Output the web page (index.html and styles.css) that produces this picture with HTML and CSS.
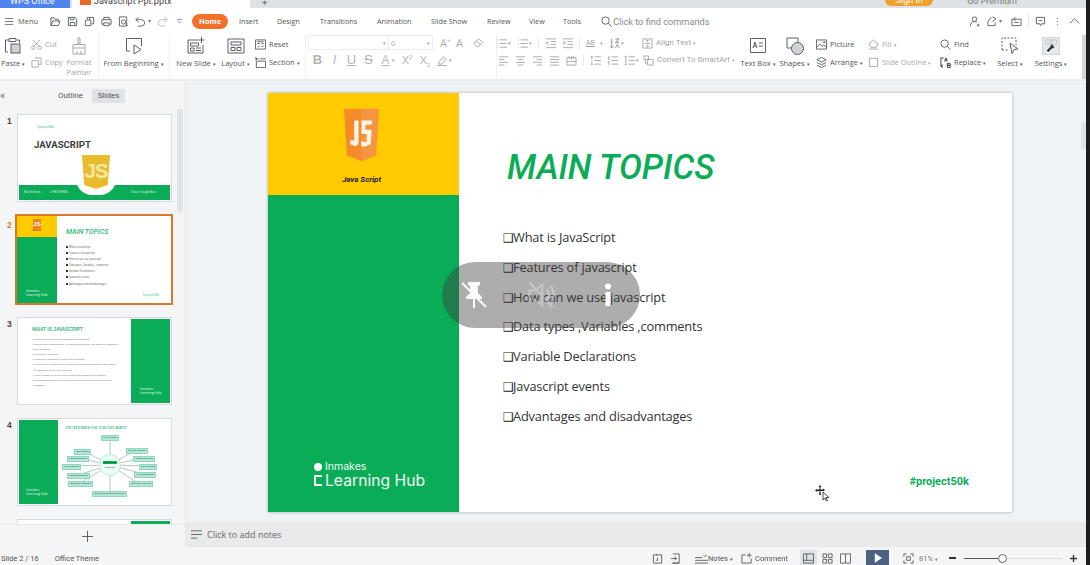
FILE: index.html
```html
<!DOCTYPE html>
<html lang="en">
<head>
    <meta charset="UTF-8">
    <meta name="viewport" content="width=device-width, initial-scale=1.0">
    <title>Javascript Ppt - WPS Office</title>
    <link rel="stylesheet" href="styles.css">
</head>
<body>
<div class="window">
    <div class="app">
        <!-- title bar, mostly cut off at the top of the picture -->
        <div class="titlebar">
            <div class="tab-wps">WPS Office</div>
            <div class="tab-doc"><span class="doc-icon">P</span><span>Javascript Ppt.pptx</span></div>
            <div class="tab-add">+</div>
            <div class="title-right">
                <span class="signin">Sign in</span>
                <span class="premium">Go Premium</span>
            </div>
        </div>

        <div class="menubar">
            <svg class="ic menu-ic" viewBox="0 0 12 10"><path d="M1 1.5h10M1 5h10M1 8.5h10"/></svg>
            <span class="menu-text">Menu</span>
            <div class="quick">
                <svg class="ic" viewBox="0 0 12 12"><path d="M1 10.5V2h3.5l1 1.5h3.5V5.500M1 10.5l2-5h8l-2 5z"/></svg>
                <svg class="ic" viewBox="0 0 12 12"><path d="M1.500 1.500h7l2 2v7h-9zM3.500 10.500V7h5v3.500M3.500 1.500v2.500h4v-2.500"/></svg>
                <svg class="ic" viewBox="0 0 12 12"><path d="M3.500 4V1.500h7v7H8M1.500 4.500h6v6h-6zM6 1.500v3"/></svg>
                <svg class="ic" viewBox="0 0 12 12"><path d="M3 4V1.500h6V4M1 4h10v5H9M3 9H1V4M3 7.500h6v3H3z"/></svg>
                <svg class="ic" viewBox="0 0 12 12"><path d="M1.500 1h8v10h-8z"/><circle cx="6" cy="6.500" r="2.300"/><path d="M7.700 8l3 3"/></svg>
                <svg class="ic" viewBox="0 0 12 12"><path d="M4 1L1 4l3 3M1 4h6a3 3 0 010 7H3"/></svg>
                <span class="caret">▾</span>
                <svg class="ic faint" viewBox="0 0 12 12"><path d="M8 1l3 3-3 3M11 4H5a3 3 0 000 7h4"/></svg>
                <svg class="ic small-ic" viewBox="0 0 10 10"><path d="M2 2h6M2 4l3 3 3-3"/></svg>
            </div>
            <nav class="tabs">
                <span class="tab home">Home</span>
                <span class="tab t-insert">Insert</span>
                <span class="tab t-design">Design</span>
                <span class="tab t-trans">Transitions</span>
                <span class="tab t-anim">Animation</span>
                <span class="tab t-show">Slide Show</span>
                <span class="tab t-review">Review</span>
                <span class="tab t-view">View</span>
                <span class="tab t-tools">Tools</span>
            </nav>
            <div class="find">
                <svg class="ic" viewBox="0 0 12 12"><circle cx="5" cy="5" r="4"/><path d="M8 8l3.500 3.500"/></svg>
                <span>Click to find commands</span>
            </div>
            <div class="menu-right">
                <svg class="ic" viewBox="0 0 12 12"><circle cx="6" cy="3.500" r="2.500"/><path d="M1.500 11c0-3 2-5 4.500-5 1 0 2 .3 2.700 1M8.500 10h3M10 8.500v3"/></svg>
                <svg class="ic" viewBox="0 0 12 12"><path d="M6 2h-1l-3 4v4.500h8V7M7 1l4 2-4 3"/></svg>
                <span class="caret">▾</span>
                <svg class="ic" viewBox="0 0 12 12"><path d="M1 3.500h10v7H1zM3.500 7h5M5 1.500l-2 2 2 1.500"/></svg>
                <span class="menu-sep"></span>
                <svg class="ic" viewBox="0 0 12 12"><path d="M1.500 1.500h9v7H7l-1 2-1-2H1.500zM4 5h4"/></svg>
                <svg class="ic" viewBox="0 0 12 12"><path d="M6 2v1M6 5.500v1M6 9v1"/></svg>
                <svg class="ic" viewBox="0 0 12 12"><path d="M1 8l5-5 5 5"/></svg>
            </div>
        </div>

        <div class="ribbon">
            <div class="big w-paste">
                <svg class="ic ic-l" viewBox="0 0 18 18"><path d="M4 15H1.500V3H5M13 3h2.500v3M5 1.500h7v3H5z"/><rect class="fill" x="7" y="7" width="9" height="9"/></svg>
                <span>Paste <i>▾</i></span>
            </div>
            <div class="stack w-clip faded">
                <div class="row"><svg class="ic" viewBox="0 0 12 12"><path d="M2 1l7 7M10 1L3 8"/><circle cx="2.500" cy="9.500" r="1.800"/><circle cx="9.500" cy="9.500" r="1.800"/></svg><span>Cut</span></div>
                <div class="row"><svg class="ic" viewBox="0 0 12 12"><path d="M4 1h7v7H8M1 4h7v7H1z"/></svg><span>Copy</span></div>
            </div>
            <div class="big w-painter faded">
                <svg class="ic ic-l" viewBox="0 0 18 18"><path d="M8 1h2v6H8zM3 7.500h12V11H3zM3 11l0 6h12v-6M7 14v3M11 14v3"/></svg>
                <span>Format<br>Painter</span>
            </div>
            <span class="sep s1"></span>
            <div class="big w-begin">
                <svg class="ic ic-l" viewBox="0 0 18 18"><path d="M5 14H1.500V1.500h15V9M9 8l7 4.500-7 4.500z"/></svg>
                <span>From Beginning <i>▾</i></span>
            </div>
            <span class="sep s2"></span>
            <div class="big w-new">
                <svg class="ic ic-l" viewBox="0 0 18 18"><path d="M11 3H1v13h15V8M3.500 6h8v3h-8zM3.500 11h3.500v3H3.500zM9 11h5M9 13.500h5M14.500 0v6M11.500 3h6"/></svg>
                <span>New Slide <i>▾</i></span>
            </div>
            <div class="big w-layout">
                <svg class="ic ic-l" viewBox="0 0 18 18"><path d="M1 2h16v14H1zM4 5h10v3H4zM4 10.500h4v3H4zM10 10.500h4v3h-4z"/></svg>
                <span>Layout <i>▾</i></span>
            </div>
            <div class="stack w-reset">
                <div class="row"><svg class="ic" viewBox="0 0 12 12"><path d="M.5 1h11v10H.5zM2.500 3h7M2.500 5h3M7 5h2.500M3 8.500h2M7 8h2.500"/></svg><span>Reset</span></div>
                <div class="row"><svg class="ic" viewBox="0 0 12 12"><path d="M0 2h4M5.500 2h6.500M1.500 4.500h10v7h-10zM.5 .5l2 1.500-2 1.500"/></svg><span>Section <i>▾</i></span></div>
            </div>
            <span class="sep s3"></span>
            <div class="font-group faded">
                <div class="font-top">
                    <div class="font-box font-name"><i>▾</i></div>
                    <div class="font-box font-size">0<i>▾</i></div>
                    <span class="glyph">A<sup>+</sup></span>
                    <span class="glyph">A<sup>-</sup></span>
                    <svg class="ic eraser" viewBox="0 0 12 12"><path d="M1 7l5-5 4.500 3.500-4.500 5H4zM3.500 4.500L8 8"/></svg>
                </div>
                <div class="font-bottom">
                    <b class="fmt">B</b><em class="fmt">I</em><u class="fmt">U</u><s class="fmt">S</s>
                    <u class="fmt fmt-a">A</u><i class="tiny-caret">▾</i>
                    <span class="fmt sc">X<sup>2</sup></span><span class="fmt sc">X<sub>2</sub></span>
                    <svg class="ic" viewBox="0 0 12 12"><path d="M2 8l5-6 3 2.500-5 5.500H2zM0 11.500h11"/></svg><i class="tiny-caret">▾</i>
                </div>
            </div>
            <span class="sep s4"></span>
            <div class="para-group faded">
                <div class="para-row">
                    <svg class="ic" viewBox="0 0 12 12"><path d="M1 2h1M4 2h8M1 6h1M4 6h8M1 10h1M4 10h8"/></svg><i class="tiny-caret">▾</i>
                    <svg class="ic" viewBox="0 0 12 12"><path d="M1 2h1M4 2h8M1 6h1M4 6h8M1 10h1M4 10h8"/></svg><i class="tiny-caret">▾</i>
                    <span class="para-sep"></span>
                    <svg class="ic" viewBox="0 0 12 12"><path d="M1 1h11M6 4h6M6 7h6M1 10.500h11M4 4L1 5.500 4 7"/></svg>
                    <svg class="ic" viewBox="0 0 12 12"><path d="M1 1h11M6 4h6M6 7h6M1 10.500h11M1 4l3 1.500L1 7"/></svg>
                    <span class="para-sep"></span>
                    <span class="ab">AB</span><i class="tiny-caret">▾</i>
                    <svg class="ic dark" viewBox="0 0 12 12"><path d="M3 1v10M1 9l2 2 2-2M7 1h4l-4 4h4M7 11l2-4 2 4"/></svg><i class="tiny-caret">▾</i>
                    <svg class="ic align-ic" viewBox="0 0 12 12"><path d="M1 1h10v10H1zM6 2.500v2M4.500 3.500L6 2l1.500 1.500M6 9.500v-2M4.500 8.500L6 10l1.500-1.500M3 6h6"/></svg>
                    <span class="lbl">Align Text <i>▾</i></span>
                </div>
                <div class="para-row para-low">
                    <svg class="ic" viewBox="0 0 12 12"><path d="M1 2h10M1 5h6M1 8h10M1 11h6"/></svg>
                    <svg class="ic" viewBox="0 0 12 12"><path d="M1 2h10M3 5h6M1 8h10M3 11h6"/></svg>
                    <svg class="ic" viewBox="0 0 12 12"><path d="M1 2h10M5 5h6M1 8h10M5 11h6"/></svg>
                    <svg class="ic" viewBox="0 0 12 12"><path d="M1 2h10M1 5h10M1 8h10M1 11h10"/></svg>
                    <svg class="ic" viewBox="0 0 12 12"><path d="M1 3h10v8H1zM6 1v4M1 7h10M3.500 1v3M8.500 1v3"/></svg>
                    <span class="para-sep"></span>
                    <svg class="ic" viewBox="0 0 12 12"><path d="M5 2h7M5 6h7M5 10h7M2 1v4M1 2l1-1 1 1M2 7v4M1 10l1 1 1-1"/></svg>
                    <svg class="ic" viewBox="0 0 12 12"><path d="M5 2h7M5 6h7M5 10h7M2 1v4M1 4l1 1 1-1M2 7v4M1 8l1-1 1 1"/></svg>
                    <svg class="ic" viewBox="0 0 12 12"><path d="M5 2h7M5 6h7M5 10h7M2 1v10M1 2l1-1 1 1M1 10l1 1 1-1"/></svg><i class="tiny-caret">▾</i>
                    <svg class="ic smart-ic" viewBox="0 0 12 12"><path d="M1 1h5v4H1zM5 5h6v6H5zM2.500 5v4H5"/></svg>
                    <span class="lbl">Convert To SmartArt <i>▾</i></span>
                </div>
            </div>
            <div class="big w-textbox">
                <svg class="ic ic-l" viewBox="0 0 18 18"><path d="M1.500 1.500h15v14h-15zM4 15.500h10"/><path d="M4 11L6 5l2 6M5 9h2M10 6h4M10 9h4"/></svg>
                <span>Text Box <i>▾</i></span>
            </div>
            <div class="big w-shapes">
                <svg class="ic ic-l" viewBox="0 0 18 18"><path d="M1 1h11v10H1z"/><circle class="fill" cx="11.500" cy="11.500" r="6"/></svg>
                <span>Shapes <i>▾</i></span>
            </div>
            <div class="stack w-pic">
                <div class="row"><svg class="ic" viewBox="0 0 12 12"><path d="M.5 1h11v10H.5zM1 9l3-3.500 2.500 2.500 2-1.500 3 2.500"/><circle cx="9" cy="3.500" r=".8"/></svg><span>Picture</span></div>
                <div class="row"><svg class="ic" viewBox="0 0 12 12"><path d="M6 .5l5 2.500-5 2.500L1 3zM1 6l5 2.500L11 6M1 9l5 2.500L11 9"/></svg><span>Arrange <i>▾</i></span></div>
            </div>
            <div class="stack w-fill faded">
                <div class="row"><svg class="ic" viewBox="0 0 12 12"><path d="M6 1l5 4-2 4H3L1 5zM1 11h10"/></svg><span>Fill <i>▾</i></span></div>
                <div class="row"><svg class="ic" viewBox="0 0 12 12"><path d="M1.500 1.500h9v9h-9z"/></svg><span>Slide Outline <i>▾</i></span></div>
            </div>
            <div class="stack w-find">
                <div class="row"><svg class="ic" viewBox="0 0 12 12"><circle cx="5" cy="5" r="4"/><path d="M8 8l3.500 3.500"/></svg><span>Find</span></div>
                <div class="row"><svg class="ic dark" viewBox="0 0 12 12"><path d="M4 1H1v9h2M1 10l2-1.500M1 10l2 1.500"/><path d="M5 5l1.500-4L8 5M5.500 3.500h2M8 7h2.500a1 1 0 010 2H8zM8 9h3v2.500H8z"/></svg><span>Replace <i>▾</i></span></div>
            </div>
            <div class="big w-select">
                <svg class="ic ic-l" viewBox="0 0 18 18"><path d="M1 13V1h14v7M1 13h6" stroke-dasharray="2 1.500"/><path d="M9 6l8 6-4 .5-2 4z"/></svg>
                <span>Select <i>▾</i></span>
            </div>
            <div class="big w-settings">
                <span class="settings-ic">
                    <svg viewBox="0 0 18 18"><path class="panes" d="M3 2h5v5H3zM10 2h5v5h-5z"/><path class="wrench" d="M5 15l5-5M9 8l3 3"/></svg>
                </span>
                <span>Settings <i>▾</i></span>
            </div>
            <div class="ribbon-scroll"></div>
        </div>

        <div class="main">
            <aside class="panel">
                <div class="panel-head">
                    <span class="collapse">«</span>
                    <span class="panel-tab">Outline</span>
                    <span class="panel-tab active">Slides</span>
                </div>
                <div class="thumbs">
                    <div class="panel-scroll"></div>
                    <div class="thumb-row">
                        <span class="num">1</span>
                        <div class="thumb t1">
                            <small class="t1-tag">#project50k</small>
                            <strong class="t1-title">JAVASCRIPT</strong>
                            <div class="t1-js">JS</div>
                            <div class="t1-band">
                                <span>Ravi Krishnan</span><span>+ PHD IN HTML</span>
                                <span class="t1-trainer">Trainer: Google Meet</span>
                            </div>
                        </div>
                    </div>
                    <div class="thumb-row current">
                        <span class="num">2</span>
                        <div class="thumb t2">
                            <div class="t2-side">
                                <div class="t2-yellow"><span class="t2-js">JS</span><em>Java Script</em></div>
                                <div class="t2-green"><span>Inmakes<br>Learning Hub</span></div>
                            </div>
                            <div class="t2-body">
                                <em class="t2-title">MAIN TOPICS</em>
                                <ul>
                                    <li>What is JavaScript</li>
                                    <li>Features of javascript</li>
                                    <li>How can we use javascript</li>
                                    <li>Data types ,Variables ,comments</li>
                                    <li>Variable Declarations</li>
                                    <li>Javascript events</li>
                                    <li>Advantages and disadvantages</li>
                                </ul>
                                <span class="t2-tag">#project50k</span>
                            </div>
                        </div>
                    </div>
                    <div class="thumb-row">
                        <span class="num">3</span>
                        <div class="thumb t3">
                            <div class="t3-body">
                                <b>WHAT IS JAVASCRIPT</b>
                                <ul>
                                    <li>JavaScript is a client side programming language</li>
                                    <li>Used in web development, to create applications, the power of computer</li>
                                    <li>and the server</li>
                                    <li>Scripted by Netscape</li>
                                    <li>Is popularly known as a client side language</li>
                                    <li>It allows you to implement dynamic features on web pages that cannot</li>
                                    <li>be done with only HTML and CSS</li>
                                    <li>HTML defines the structure of a web and presents the content</li>
                                    <li>CSS describes visually styles for the webpage presentation and web</li>
                                    <li>browsers</li>
                                </ul>
                            </div>
                            <div class="t3-side"><span>Inmakes<br>Learning Hub</span></div>
                        </div>
                    </div>
                    <div class="thumb-row">
                        <span class="num">4</span>
                        <div class="thumb t4">
                            <div class="t4-side"><span>Inmakes<br>Learning Hub</span></div>
                            <div class="t4-body">
                                <b class="t4-title">FEATURES OF JAVASCRIPT</b>
                                <div class="diagram">
                                    <svg class="spokes" viewBox="0 0 114 70">
                                        <path d="M52 31L52 4M52 31L26 17M52 31L20 24M52 31L14 32M52 31L20 41M52 31L22 49M52 31L78 16M52 31L85 24M52 31L91 32M52 31L86 40M52 31L80 49M52 31L52 58"/>
                                    </svg>
                                    <span class="node n1">Light Weighted</span>
                                    <span class="node n2">Case Sensitive</span>
                                    <span class="node n3">Control Statements</span>
                                    <span class="node n4">Client Functions</span>
                                    <span class="node n5">Looping Statements</span>
                                    <span class="node n6">Interpreter Technology</span>
                                    <span class="node n7">Scripting Language</span>
                                    <span class="node n8">Validate User Input</span>
                                    <span class="node n9">Event Handling</span>
                                    <span class="node n10">If...else Statements</span>
                                    <span class="node n11">Interpreted Language</span>
                                    <span class="node n12">Object-Based Scripting Language</span>
                                    <div class="hub"><b>JavaScript</b><span>Features</span></div>
                                </div>
                            </div>
                        </div>
                    </div>
                    <div class="thumb-row">
                        <span class="num"></span>
                        <div class="thumb t5"><div class="t5-green"></div></div>
                    </div>
                </div>
                <div class="panel-add">
                    <svg viewBox="0 0 12 12"><path d="M6 0v12M0 6h12"/></svg>
                </div>
            </aside>

            <div class="editor">
                <div class="canvas">
                    <section class="slide">
                        <div class="slide-side">
                            <div class="slide-yellow">
                                <svg class="js-shield" viewBox="0 0 36 55">
                                    <path fill="#f58a28" d="M0 0h36l-3 48-15 6-15-6z"/>
                                    <path fill="#fbb98a" d="M18 0h18l-3 48-15 6z" opacity=".25"/>
                                    <path fill="#fff2e6" d="M15 12h-4.500v21l-4 -1v4.500l5 2 3.500-2zM18 12h11l-.5 4.500h-6.500v5h6.500l-1 15-7 2.500-3-1v-4.500l5.500 1 .5-8.500h-5.500z"/>
                                </svg>
                                <em class="js-label">Java Script</em>
                            </div>
                            <div class="slide-green">
                                <div class="brand">
                                    <div class="brand-top"><span class="brand-dot"></span><span>Inmakes</span></div>
                                    <div class="brand-main">
                                        <span class="brand-mark"></span>
                                        <span>Learning Hub</span>
                                    </div>
                                </div>
                            </div>
                        </div>
                        <div class="slide-body">
                            <h1>MAIN TOPICS</h1>
                            <ul class="topics">
                                <li>What is JavaScript</li>
                                <li>Features of javascript</li>
                                <li>How can we use javascript</li>
                                <li>Data types ,Variables ,comments</li>
                                <li>Variable Declarations</li>
                                <li>Javascript events</li>
                                <li>Advantages and disadvantages</li>
                            </ul>
                            <div class="hashtag">#project50k</div>
                        </div>
                    </section>
                    <div class="side-scroll"></div>
                    <div class="video-pill">
                        <svg class="pin" viewBox="0 0 26 28"><path d="M7 1h12v3l-2 1v7l4 4v2H14v9h-2v-9H5v-2l4-4V5L7 4z"/><path class="slash" d="M1 2l24 24"/></svg>
                        <svg class="mute" viewBox="0 0 26 26"><path d="M3 9h5l6-5v18l-6-5H3zM18 8c2 3 2 7 0 10M21 5c4 5 4 11 0 16M3 2l20 22"/></svg>
                        <svg class="info" viewBox="0 0 8 24"><circle cx="4" cy="3.500" r="3"/><path d="M1.500 9h5v14h-5z"/></svg>
                    </div>
                    <svg class="pointer" viewBox="0 0 14 18"><path d="M4 1l1.500 2h-1v2.500H7v-1l2 1.500-2 1.500V7H4.500v2.500h1L4 11.500 2.500 9.500h1V7H1v1L-1 6.500 1 5v.500h2.500V3h-1z" transform="translate(1 0)"/><path class="arrow" d="M8 8v8l2-2 1.500 3 1-.5-1.500-3h3z"/></svg>
                </div>
                <div class="notes">
                    <svg class="ic" viewBox="0 0 12 10"><path d="M0 1h12M0 5h12M0 9h7"/></svg>
                    <span>Click to add notes</span>
                </div>
            </div>
        </div>

        <footer class="status">
            <span class="st-slide">Slide 2 / 16</span>
            <span class="st-theme">Office Theme</span>
            <div class="st-right">
                <svg class="ic" viewBox="0 0 12 12"><path d="M1.500 2h9v9h-9zM5 1v2M6 5v3h-1.500"/></svg>
                <svg class="ic st-exit" viewBox="0 0 12 12"><path d="M3 1h7v10H3M1 6h6M5 4l2 2-2 2M2 11h8"/></svg>
                <svg class="ic st-notes" viewBox="0 0 14 12"><path d="M0 5h8M0 8h14M0 11h14M9 2l2 2 2-2"/></svg>
                <span class="st-text st-notes-text">Notes <i>▾</i></span>
                <svg class="ic st-comment" viewBox="0 0 12 12"><path d="M5 2H1v9h10V6M9 0v5M6.500 2.500h5"/></svg>
                <span class="st-text st-comment-text">Comment</span>
                <span class="view-btn active"><svg class="ic" viewBox="0 0 12 12"><path d="M.5 1h11v10H.5zM4 1v7M.5 8h11"/></svg></span>
                <span class="view-btn grid-btn"><svg class="ic" viewBox="0 0 12 12"><path d="M1 1h4v4H1zM7 1h4v4H7zM1 7h4v4H1zM7 7h4v4H7z"/></svg></span>
                <span class="view-btn"><svg class="ic" viewBox="0 0 12 12"><path d="M.5 1h11v10H.5zM6 1v10"/></svg></span>
                <span class="play"><svg viewBox="0 0 10 12"><path d="M1 0l9 6-9 6z"/></svg></span>
                <svg class="ic st-fit" viewBox="0 0 12 12"><path d="M1 4V1h3M8 1h3v3M11 8v3H8M4 11H1V8M4 4h4v4H4z"/></svg>
                <span class="st-zoom">81% <i>▾</i></span>
                <span class="zoom-minus"></span>
                <div class="slider"><span class="slider-fill"></span><span class="knob"></span><span class="slider-rest"></span></div>
                <svg class="zoom-plus" viewBox="0 0 8 8"><path d="M4 0v8M0 4h8"/></svg>
            </div>
        </footer>
    </div>
    <div class="edge"></div>
</div>
</body>
</html>
```

FILE: styles.css
```css
* {
    box-sizing: border-box;
}

html, body {
    margin: 0;
    padding: 0;
    width: 1090px;
    height: 565px;
    overflow: hidden;
}

body {
    font-family: "Open Sans", "Noto Sans", sans-serif;
    font-size: 7.3px;
    color: #555;
}

i {
    font-style: normal;
}

ul {
    list-style: none;
    margin: 0;
    padding: 0;
}

.window {
    display: flex;
    width: 1090px;
    height: 565px;
    background: #1d1d1f;
    filter: blur(0.4px);
}

.app {
    width: 1086px;
    height: 565px;
    display: flex;
    flex-direction: column;
    background: #fff;
}

.edge {
    flex: 1;
    background: #1d1d1f;
}

/* icons */
.ic {
    width: 11px;
    height: 11px;
    flex: none;
    fill: none;
    stroke: #5c5f63;
    stroke-width: 1;
}

.ic-l {
    width: 18px;
    height: 18px;
}

.ic .fill {
    fill: #cfd1d4;
}

.ic.dark {
    stroke: #333;
}

.faint {
    opacity: .45;
}

.faded {
    opacity: .55;
}

/* title bar */
.titlebar {
    height: 8px;
    display: flex;
    align-items: flex-end;
    overflow: hidden;
    background: #dfe1e5;
    flex: none;
    font-family: Roboto, sans-serif;
    font-size: 9px;
    line-height: 12px;
}

.tab-wps {
    width: 70px;
    height: 8px;
    background: #4e83ee;
    color: #fff;
    padding: 0 0 0 10px;
    line-height: 3px;
}

.tab-doc {
    width: 178px;
    height: 8px;
    margin-left: 2px;
    background: #fff;
    display: flex;
    color: #444;
    line-height: 3px;
    padding-left: 8px;
    gap: 3px;
}

.doc-icon {
    width: 11px;
    height: 5px;
    background: #ea6a2c;
    color: #ea6a2c;
}

.tab-add {
    margin-left: 12px;
    line-height: 6px;
    height: 8px;
    color: #666;
}

.title-right {
    margin-left: auto;
    margin-right: 69px;
    display: flex;
    height: 8px;
    gap: 21px;
}

.signin {
    width: 48px;
    height: 6px;
    background: #f0a12d;
    color: #fff;
    text-align: center;
    border-radius: 0 0 8px 8px;
    line-height: 1px;
}

.premium {
    color: #777;
    line-height: 2px;
    padding-left: 13px;
}

/* menu bar */
.menubar {
    height: 25px;
    flex: none;
    display: flex;
    align-items: center;
    background: #fff;
    padding: 1px 0 0 4px;
}

.menu-ic {
    width: 10px;
    height: 9px;
}

.menu-text {
    margin-left: 4px;
    width: 19px;
    font-size: 7.5px;
}

.quick {
    display: flex;
    align-items: center;
    margin-left: 13px;
    width: 135px;
    gap: 6px;
}

.small-ic {
    width: 7px;
    height: 7px;
    margin-left: 2px;
}

.caret {
    font-size: 6px;
    margin-left: -4px;
    color: #777;
}

.tabs {
    display: flex;
    align-items: center;
    margin-left: 7px;
    font-size: 7.2px;
}

.tab {
    white-space: nowrap;
    flex: none;
}

.home {
    width: 36px;
    height: 15px;
    line-height: 15px;
    text-align: center;
    border-radius: 8px;
    background: #f2702c;
    color: #fff;
    font-weight: 700;
    font-size: 7.5px;
    margin-right: 11px;
}

.t-insert { width: 38px; }
.t-design { width: 43px; }
.t-trans { width: 57px; }
.t-anim { width: 54px; }
.t-show { width: 56px; }
.t-review { width: 42px; }
.t-view { width: 34px; }
.t-tools { width: 38px; }

.find {
    display: flex;
    align-items: center;
    gap: 1px;
    font-family: Roboto, sans-serif;
    font-size: 9.2px;
    color: #8a8a8a;
    white-space: nowrap;
}

.menu-right {
    margin-left: auto;
    margin-right: 6px;
    display: flex;
    align-items: center;
    gap: 6px;
}

.menu-right .caret {
    margin-right: 3px;
}

.menu-sep {
    width: 1px;
    height: 14px;
    background: #e6e6e6;
}

/* ribbon */
.ribbon {
    height: 48px;
    flex: none;
    display: flex;
    background: #fff;
    border-bottom: 2px solid #e9ecef;
    font-size: 7.5px;
    line-height: 10px;
    white-space: nowrap;
}

.ribbon i {
    font-size: 5px;
}

.big {
    display: flex;
    flex-direction: column;
    align-items: center;
    padding-top: 4px;
    flex: none;
    text-align: center;
}

.big > span {
    margin-top: 3px;
}

.w-paste { width: 26px; }
.w-clip { margin-left: 5px; width: 36px; }
.w-painter { width: 24px; }
.w-painter > span { margin-top: 2px; }
.w-begin { width: 57px; margin-left: 6px; }
.w-new { width: 38px; margin-left: 7px; }
.w-layout { width: 27px; margin-left: 7px; }
.w-reset { margin-left: 6px; width: 46px; }
.w-textbox { width: 34px; }
.w-shapes { margin-left: 6px; width: 27px; }
.w-pic { margin-left: 8px; width: 52px; }
.w-fill { width: 70px; }
.w-find { margin-left: 2px; width: 51px; }
.w-select { margin-left: 6px; width: 26px; }
.w-settings { margin-left: 12px; width: 32px; }

.stack {
    display: flex;
    flex-direction: column;
    gap: 6px;
    padding-top: 5px;
    flex: none;
}

.row {
    display: flex;
    align-items: center;
    gap: 3px;
    height: 12px;
}

.sep {
    width: 1px;
    height: 44px;
    margin-top: 1px;
    background: #f0f1f2;
    flex: none;
}

.s1 { margin-left: 7px; }
.s2 { margin-left: 7px; }
.s3 { margin-left: 4px; }
.s4 { margin-left: 5px; }

.font-group {
    margin-left: 2px;
    width: 183px;
    padding-top: 2px;
    flex: none;
}

.font-top, .font-bottom, .para-row {
    display: flex;
    align-items: center;
}

.font-top {
    height: 15px;
}

.font-box {
    height: 15px;
    border: 1px solid #ddd;
    display: flex;
    align-items: center;
    justify-content: space-between;
    padding: 0 2px;
}

.font-name {
    width: 81px;
    justify-content: flex-end;
}

.font-size {
    width: 44px;
    border-left: 0;
    margin-right: 7px;
}

.glyph {
    font-size: 11px;
    width: 16px;
    color: #666;
}

.glyph sup {
    font-size: 6px;
    vertical-align: 4px;
    line-height: 0;
}

.eraser {
    margin-left: 1px;
}

.font-bottom {
    margin-top: 2px;
    padding-left: 4px;
    gap: 6px;
    height: 16px;
}

.fmt {
    font-family: "Liberation Sans", sans-serif;
    font-size: 13px;
    color: #777;
    width: 11px;
    text-align: center;
}

.sc {
    font-size: 11px;
    width: 12px;
}

.sc sup, .sc sub {
    font-size: 6px;
    line-height: 0;
}

.fmt-a {
    font-size: 12px;
}

.tiny-caret {
    font-size: 6px;
    margin-left: -5px;
}

.para-group {
    width: 245px;
    flex: none;
    padding-top: 2px;
    font-family: Roboto, sans-serif;
    font-size: 8px;
    margin-left: -1px;
}

.para-row {
    gap: 6px;
    height: 16px;
    margin-bottom: 1px;
}

.para-low {
    padding-left: 2px;
}

.para-sep {
    width: 1px;
    height: 12px;
    background: #ddd;
}

.ab {
    text-decoration: underline;
    width: 13px;
    font-size: 7px;
}

.align-ic {
    margin-left: 12px;
}

.smart-ic {
    margin-left: -2px;
}

.lbl {
    margin-left: -3px;
}

.big > .settings-ic {
    width: 18px;
    height: 18px;
    margin-top: 0;
    background: #e7e8ea;
    border: 1px solid #d5d6d8;
}

.settings-ic svg {
    display: block;
    width: 16px;
    height: 16px;
}

.panes {
    fill: none;
    stroke: #c4c5c8;
}

.wrench {
    fill: none;
    stroke: #333;
    stroke-width: 2.5;
}

.ribbon-scroll {
    margin-left: auto;
    width: 4px;
    background: #d5d6d8;
    height: 44px;
    margin-top: 2px;
}

/* main area */
.main {
    flex: 1;
    display: flex;
    min-height: 0;
}

.panel {
    width: 186px;
    flex: none;
    display: flex;
    flex-direction: column;
    background: #f3f5f7;
    border-right: 1px solid #e6e8ea;
}

.panel-head {
    height: 24px;
    flex: none;
    display: flex;
    align-items: center;
    padding-top: 6px;
    font-family: Roboto, sans-serif;
    font-size: 8px;
}

.collapse {
    width: 54px;
    font-size: 11px;
    line-height: 10px;
    color: #666;
}

.panel-tab {
    width: 33px;
    height: 14px;
    line-height: 14px;
    text-align: center;
}

.panel-tab.active {
    margin-left: 5px;
    background: #dfe2e6;
    border-radius: 2px;
}

.thumbs {
    position: relative;
    flex: 1;
    min-height: 0;
    overflow: hidden;
    padding-top: 9px;
}

.panel-scroll {
    position: absolute;
    left: 177px;
    top: 4px;
    width: 6px;
    height: 104px;
    background: #e2e5e8;
    border-radius: 3px;
}

.thumb-row {
    display: flex;
    padding-left: 7px;
    margin-bottom: 13px;
}

.thumb-row.current {
    margin-top: -1px;
    margin-bottom: 12px;
}

.num {
    width: 10px;
    font: 700 8.5px/12px "Liberation Sans", sans-serif;
    color: #444;
    padding-top: 1px;
}

.current .num {
    color: #d9792f;
    margin-top: 4px;
    margin-right: -2px;
}

.thumb {
    position: relative;
    width: 155px;
    height: 88px;
    background: #fff;
    border: 1px solid #d7dadd;
    overflow: hidden;
    flex: none;
    font-size: 2.4px;
    line-height: 1.2;
    display: flex;
}

.current .thumb {
    width: 158px;
    height: 91px;
    border: 2px solid #d9792f;
}

/* slide 1 thumb */
.t1 {
    display: block;
}

.t1-tag {
    position: absolute;
    left: 19px;
    top: 11px;
    font-size: 3px;
    color: #0bac57;
}

.t1-title {
    position: absolute;
    left: 16px;
    top: 24px;
    font: 700 9.6px/12px Roboto, sans-serif;
    color: #3d3d3d;
}

.t1-js {
    position: absolute;
    left: 64px;
    top: 40px;
    z-index: 2;
    width: 28px;
    height: 34px;
    background: #e8bc2c;
    clip-path: polygon(0 0, 100% 0, 92% 88%, 50% 100%, 8% 88%);
    color: #f7e8a8;
    font: 700 20px/32px "Liberation Sans", sans-serif;
    letter-spacing: -1px;
    text-align: center;
}

.t1-band {
    position: absolute;
    left: 1px;
    right: 1px;
    bottom: 1px;
    height: 15px;
    background: #0bac57;
    color: #e6f7ee;
    display: flex;
    align-items: center;
    gap: 9px;
    padding-left: 5px;
    font-size: 2.6px;
}

.t1-band::before {
    content: "";
    position: absolute;
    left: 57px;
    top: -6px;
    width: 40px;
    height: 16px;
    background: #fff;
    border-radius: 0 0 20px 20px;
}

.t1-trainer {
    margin-left: auto;
    margin-right: 14px;
}

/* slide 2 thumb */
.t2-side {
    width: 40px;
    flex: none;
    display: flex;
    flex-direction: column;
}

.t2-yellow {
    height: 21px;
    background: #ffcb00;
    display: flex;
    flex-direction: column;
    align-items: center;
    padding-top: 3px;
    font-size: 2px;
    color: #333;
}

.t2-js {
    width: 8px;
    height: 11px;
    background: #f58220;
    color: #fff;
    font: 700 6px/11px "Liberation Sans", sans-serif;
    text-align: center;
}

.t2-green {
    flex: 1;
    background: #0bac57;
    color: #e9f8f0;
    display: flex;
    align-items: flex-end;
    padding: 0 0 6px 9px;
    font-size: 3.4px;
}

.t2-body {
    flex: 1;
    position: relative;
    padding: 12px 0 0 9px;
}

.t2-title {
    font: italic 500 7px/9px Roboto, sans-serif;
    color: #2cb873;
    display: block;
    margin-bottom: 9px;
}

.t2-body li {
    height: 6.1px;
    font-size: 2.6px;
    color: #555;
}

.t2-body li::before {
    content: "";
    display: inline-block;
    width: 2px;
    height: 2px;
    background: #333;
    margin-right: 1px;
}

.t2-tag {
    position: absolute;
    right: 12px;
    bottom: 5px;
    font-size: 3px;
    color: #2cb873;
}

/* slide 3 thumb */
.t3-body {
    flex: 1;
    padding: 9px 0 0 14px;
    color: #666;
}

.t3-body b {
    display: block;
    font: 700 4.8px/6px "Liberation Sans", sans-serif;
    color: #36b87a;
    margin-bottom: 4px;
}

.t3-body li {
    height: 5.1px;
    white-space: nowrap;
    font-size: 2.5px;
    line-height: 5px;
}

.t3-body li::before {
    content: "• ";
}

.t3-side {
    width: 39px;
    margin: 1px;
    background: #0bac57;
    color: #e9f8f0;
    display: flex;
    align-items: flex-end;
    padding: 0 0 8px 9px;
    font-size: 3.4px;
}

/* slide 4 thumb */
.t4-side {
    width: 39px;
    margin: 1px 0 1px 1px;
    background: #0bac57;
    color: #e9f8f0;
    display: flex;
    align-items: flex-end;
    padding: 0 0 8px 7px;
    font-size: 3.4px;
}

.t4-body {
    flex: 1;
}

.t4-title {
    display: block;
    font: 700 4.6px/6px "Liberation Serif", serif;
    color: #36b87a;
    padding: 6px 0 0 8px;
}

.diagram {
    position: relative;
    height: 70px;
    margin-top: 3px;
}

.spokes {
    position: absolute;
    left: 0;
    top: 0;
    width: 114px;
    height: 70px;
    fill: none;
    stroke: #6f8f85;
    stroke-width: .5;
}

.node {
    position: absolute;
    background: #b0ead5;
    border: .5px solid #8fd6bd;
    color: #234;
    font-size: 2px;
    line-height: 3.5px;
    padding: 0 1px;
    white-space: nowrap;
}

.n1 { left: 43px; top: 1px; }
.n2 { left: 16px; top: 15px; }
.n3 { left: 9px; top: 22px; }
.n4 { left: 4px; top: 30px; }
.n5 { left: 9px; top: 39px; }
.n6 { left: 10px; top: 47px; }
.n7 { left: 68px; top: 14px; }
.n8 { left: 75px; top: 22px; }
.n9 { left: 81px; top: 30px; }
.n10 { left: 76px; top: 38px; }
.n11 { left: 71px; top: 47px; }
.n12 { left: 34px; top: 57px; }

.hub {
    position: absolute;
    left: 41px;
    top: 20px;
    width: 22px;
    height: 22px;
    border-radius: 50%;
    background: #eafaf4;
    border: 1px solid #b8ecd9;
    display: flex;
    flex-direction: column;
    align-items: center;
    justify-content: center;
    gap: 2px;
    font-size: 2.4px;
    color: #222;
}

.hub b {
    background: #0bac57;
    color: #063;
    padding: 0 1px;
}

.t5-green {
    margin: 1px 1px 0 auto;
    width: 39px;
    height: 100%;
    background: #0bac57;
}

.panel-add {
    height: 23px;
    flex: none;
    display: flex;
    align-items: center;
    justify-content: center;
    border-top: 1px solid #e8eaec;
    padding-right: 10px;
}

.panel-add svg {
    width: 11px;
    height: 11px;
    stroke: #555;
    stroke-width: 1;
    fill: none;
}

/* editor */
.editor {
    flex: 1;
    display: flex;
    flex-direction: column;
    min-width: 0;
    background: #eff3f6;
}

.canvas {
    position: relative;
    flex: 1;
    padding: 12px 0 0 82px;
}

.slide {
    width: 744px;
    height: 419px;
    background: #fff;
    display: flex;
    box-shadow: 0 0 3px rgba(0, 0, 0, .3);
}

.slide-side {
    width: 191px;
    flex: none;
    display: flex;
    flex-direction: column;
}

.slide-yellow {
    height: 102px;
    background: #ffcb00;
    display: flex;
    flex-direction: column;
    align-items: center;
    padding: 15px 4px 0 0;
}

.js-shield {
    width: 35px;
    height: 55px;
    display: block;
}

.js-label {
    font: italic 700 8px/12px Roboto, sans-serif;
    color: #222;
    margin-top: 11px;
}

.slide-green {
    flex: 1;
    background: #0bac57;
    padding: 266px 0 0 46px;
}

.brand {
    color: #f0faf5;
    font-family: Inter, "Open Sans", sans-serif;
}

.brand-top {
    display: flex;
    align-items: center;
    gap: 3px;
    font-size: 10.5px;
    line-height: 12px;
}

.brand-dot {
    width: 8px;
    height: 8px;
    border-radius: 50%;
    background: #fff;
}

.brand-main {
    display: flex;
    align-items: center;
    gap: 3px;
    font-size: 15.7px;
    line-height: 15px;
    font-weight: 400;
}

.brand-mark {
    width: 8px;
    height: 11px;
    border: 2px solid #fff;
    border-right: 0;
}

.slide-body {
    position: relative;
    flex: 1;
    padding: 54px 0 0 48px;
}

.slide-body h1 {
    margin: 0;
    font: italic 500 34.3px/40px Roboto, sans-serif;
    color: #0bac57;
}

.topics {
    margin-top: 36px;
    margin-left: -4px;
    font-size: 12.8px;
    letter-spacing: -.17px;
    color: #333;
}

.topics li {
    height: 29.8px;
    line-height: 29.8px;
    white-space: nowrap;
}

.topics li::before {
    content: "❑";
    display: inline-block;
    width: 10px;
    font-family: "DejaVu Sans", sans-serif;
    font-size: 12px;
    line-height: 12px;
    color: #222;
}

.hashtag {
    position: absolute;
    right: 43px;
    bottom: 23px;
    font: 700 11px/14px Roboto, sans-serif;
    color: #0bac57;
}

.side-scroll {
    position: absolute;
    right: 0;
    top: 41px;
    width: 5px;
    height: 27px;
    background: #dfe3e6;
}

.video-pill {
    position: absolute;
    left: 256px;
    top: 181px;
    width: 198px;
    height: 66px;
    border-radius: 33px;
    background: rgba(60, 60, 60, .42);
    display: flex;
    align-items: center;
}

.pin {
    width: 26px;
    height: 28px;
    margin-left: 19px;
    fill: #fff;
    opacity: .95;
}

.pin .slash {
    stroke: #fff;
    stroke-width: 2;
}

.mute {
    width: 30px;
    height: 30px;
    margin-left: 39px;
    fill: none;
    stroke: #fff;
    stroke-width: 2;
    opacity: .3;
}

.info {
    width: 8px;
    height: 24px;
    margin-left: 48px;
    fill: #fff;
}

.pointer {
    position: absolute;
    left: 629px;
    top: 403px;
    width: 14px;
    height: 18px;
    fill: #222;
    overflow: visible;
}

.pointer .arrow {
    fill: #fff;
    stroke: #222;
    stroke-width: .8;
}

.notes {
    height: 25px;
    flex: none;
    background: #e9eaec;
    display: flex;
    align-items: center;
    padding-left: 5px;
    gap: 5px;
    font-size: 9px;
    color: #666;
}

/* status bar */
.status {
    height: 18px;
    flex: none;
    display: flex;
    align-items: center;
    background: #f3f5f7;
    font-family: Roboto, sans-serif;
    font-size: 7.5px;
    padding: 4px 0 0 1px;
    white-space: nowrap;
}

.st-theme {
    margin-left: 16px;
}

.st-right {
    margin-left: auto;
    display: flex;
    align-items: center;
    height: 14px;
}

.st-exit {
    margin-left: 7px;
}

.st-notes {
    margin-left: 14px;
    width: 13px;
}

.st-text {
    flex: none;
}

.st-text i {
    font-size: 5px;
}

.st-notes-text {
    width: 28px;
}

.st-comment {
    margin-left: 5px;
}

.st-comment-text {
    margin-left: 3px;
    width: 32px;
}

.view-btn {
    width: 17px;
    height: 16px;
    display: flex;
    align-items: center;
    justify-content: center;
}

.view-btn.active {
    margin-left: 13px;
    background: #dfe2e6;
}

.grid-btn {
    margin: 0 1px 0 2px;
}

.play {
    width: 23px;
    height: 17px;
    margin-left: 12px;
    background: #4b6281;
    display: flex;
    align-items: center;
    justify-content: center;
}

.play svg {
    width: 8px;
    height: 10px;
    fill: #fff;
}

.st-fit {
    margin-left: 14px;
}

.st-zoom {
    margin-left: 5px;
    color: #777;
    font-size: 7.5px;
    width: 29px;
}

.st-zoom i {
    font-size: 5px;
}

.zoom-minus {
    width: 7px;
    height: 2px;
    background: #333;
    margin-left: 1px;
}

.slider {
    display: flex;
    align-items: center;
    width: 99px;
    margin-left: 8px;
}

.slider-fill {
    width: 34px;
    height: 1px;
    background: #555;
}

.knob {
    width: 9px;
    height: 9px;
    border: 1px solid #666;
    border-radius: 50%;
    background: #fff;
}

.slider-rest {
    flex: 1;
    height: 1px;
    background: #ddd;
}

.zoom-plus {
    width: 7px;
    height: 7px;
    margin: 0 9px 0 7px;
    stroke: #333;
    stroke-width: 1.5;
    fill: none;
}
```
